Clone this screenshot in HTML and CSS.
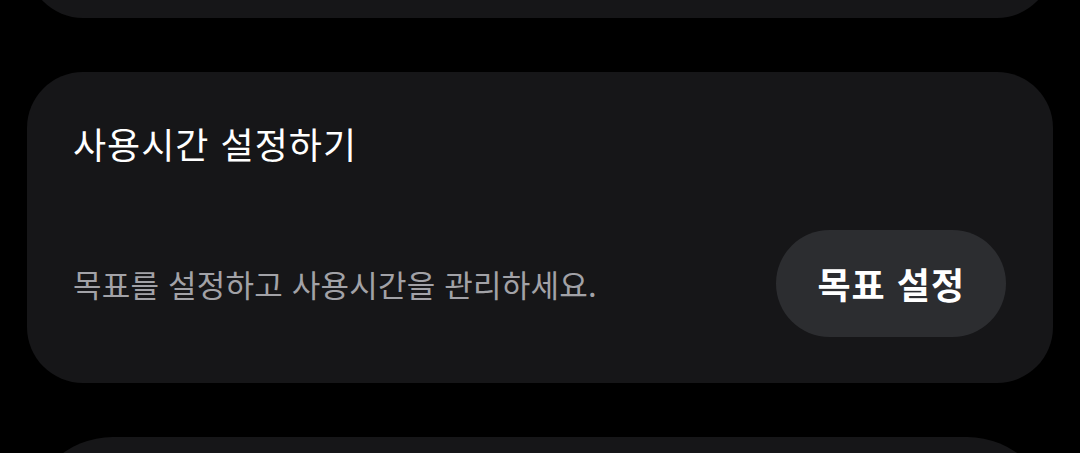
FILE: index.html
```html
<!DOCTYPE html>
<html lang="ko">

<head>
  <title>사용시간 설정하기</title>
  <link rel="stylesheet" href="styles.css">
</head>

<body>
  <div class="list">
    <div class="card card-prev"></div>

    <div class="card">
      <h2 class="card-title">사용시간 설정하기</h2>
      <div class="card-row">
        <p class="card-text">목표를 설정하고 사용시간을 관리하세요.</p>
        <button class="goal-button">목표 설정</button>
      </div>
    </div>

    <div class="card card-next"></div>
  </div>
</body>

</html>
```

FILE: styles.css
```css
body {
  margin: 0;
  background-color: #000;
  color: #fff;
  font-family: 'Noto Sans CJK KR', 'Noto Sans', sans-serif;
  overflow: hidden;
}

.list {
  display: flex;
  flex-direction: column;
  gap: 54px;
  padding: 0 27px;
}

.card {
  background: #161618;
  border-radius: 56px;
  padding: 50px 47px 46px 46px;
}

/* cards above and below, cut off by the screen */
.card-prev {
  height: 120px;
  margin-top: -102px;
  padding: 0;
  box-sizing: border-box;
}

.card-next {
  height: 200px;
  border-radius: 86px;
  padding: 0;
}

.card-title {
  margin: 0;
  font-size: 36px;
  font-weight: 400;
  letter-spacing: 1px;
  line-height: 1.2;
}

.card-row {
  display: flex;
  align-items: center;
  justify-content: space-between;
  margin-top: 65px;
}

.card-text {
  margin: 0;
  font-size: 31px;
  letter-spacing: 0.2px;
  color: #a2a2a7;
}

.goal-button {
  font-family: inherit;
  font-size: 36px;
  font-weight: 700;
  letter-spacing: 1px;
  line-height: 1.2;
  color: #fff;
  background: #2c2d30;
  border: none;
  border-radius: 54px;
  padding: 32px 41px;
}
```
